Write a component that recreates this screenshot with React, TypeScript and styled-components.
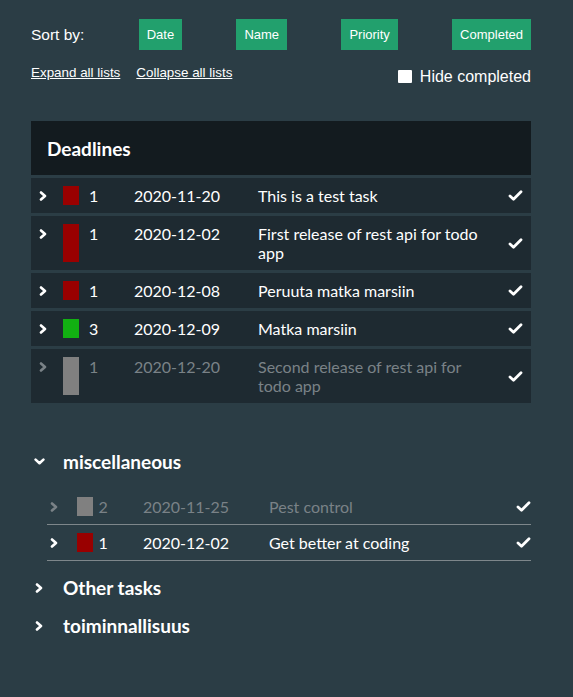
import React from "react";
import styled, { createGlobalStyle } from "styled-components";

const GlobalStyle = createGlobalStyle`
  html, body {
    margin: 0;
    padding: 0;
    background: #2b3d45;
    min-height: 100%;
  }
  body {
    font-family: "Liberation Sans", Arial, sans-serif;
    color: #ffffff;
  }
`;

const Page = styled.div`
  width: 500px;
  padding: 19px 42px 40px 31px;
`;

const SortRow = styled.div`
  display: flex;
  justify-content: space-between;
  align-items: center;
  height: 31px;
`;

const SortLabel = styled.span`
  font-size: 15.5px;
  line-height: 18px;
`;

const SortButton = styled.button`
  height: 31px;
  padding: 0 8px;
  border: none;
  background: #22a06d;
  color: #ffffff;
  font-family: "Liberation Sans", Arial, sans-serif;
  font-size: 13px;
  cursor: pointer;
`;

const LinksRow = styled.div`
  display: flex;
  justify-content: space-between;
  align-items: flex-start;
  margin-top: 15px;
`;

const Links = styled.div`
  display: flex;
  gap: 16px;
`;

const TextLink = styled.a`
  font-size: 13.4px;
  line-height: 15px;
  color: #ffffff;
  text-decoration: underline;
  cursor: pointer;
`;

const HideLabel = styled.label`
  display: flex;
  align-items: flex-end;
  gap: 8px;
  margin-top: 3px;
  font-size: 16px;
  line-height: 18px;
`;

const CheckBox = styled.span`
  width: 14px;
  height: 13px;
  background: #ffffff;
  border-radius: 1px;
  margin-bottom: 3px;
`;

const DeadlineBox = styled.section`
  margin-top: 35px;
  display: flex;
  flex-direction: column;
  gap: 3px;
`;

const DeadlineHeader = styled.div`
  height: 54px;
  display: flex;
  align-items: center;
  padding-left: 16px;
  background: #131b1f;
  font-family: Lato, "Noto Sans", sans-serif;
  font-weight: 700;
  font-size: 19px;
  line-height: 23px;
`;

const TaskRow = styled.div<{ $nested?: boolean; $done?: boolean }>`
  display: grid;
  grid-template-columns: ${(p) =>
    p.$nested
      ? "26.5px 22px 44.5px 126px 228px 1fr"
      : "24px 26px 45px 124px 227px 1fr"};
  padding: ${(p) => (p.$nested ? "8px 0 8px 3px" : "8px")};
  background: ${(p) => (p.$nested ? "transparent" : "#1e2a31")};
  border-bottom: ${(p) => (p.$nested ? "1px solid #7e878b" : "none")};
  font-family: Lato, "Noto Sans", sans-serif;
  font-size: 16px;
  line-height: 19px;
  color: ${(p) => (p.$done ? "#7a8287" : "#ffffff")};
`;

const Cell = styled.div`
  min-width: 0;
`;

const ChevronCell = styled.div`
  height: 19px;
  display: flex;
  align-items: center;
`;

const PriorityBox = styled.div<{ $color: string }>`
  width: 16px;
  height: 100%;
  min-height: 19px;
  background: ${(p) => p.$color};
`;

const CheckCell = styled.div`
  align-self: center;
  justify-self: end;
  display: flex;
`;

const Group = styled.section`
  margin-top: 47px;
  display: flex;
  flex-direction: column;
  gap: 15px;
`;

const GroupItem = styled.div`
  display: flex;
  flex-direction: column;
  gap: 16px;
`;

const GroupHeading = styled.div`
  display: flex;
  align-items: center;
  font-family: Lato, "Noto Sans", sans-serif;
  font-weight: 700;
  font-size: 19px;
  line-height: 23px;
`;

const HeadingIcon = styled.span`
  width: 16px;
  margin-right: 16px;
  display: flex;
  justify-content: center;
  align-items: center;
`;

const NestedList = styled.div`
  margin-left: 16px;
  display: flex;
  flex-direction: column;
`;

const ChevronRight = ({ color = "#fff" }: { color?: string }) => (
  <svg width="8" height="10" viewBox="0 0 8 10">
    <polyline points="2,1.5 6,5 2,8.5" fill="none" stroke={color} strokeWidth="2.6" strokeLinecap="round" strokeLinejoin="round" />
  </svg>
);

const ChevronDown = () => (
  <svg width="11" height="7" viewBox="0 0 11 7">
    <polyline points="1.6,1.6 5.5,5.2 9.4,1.6" fill="none" stroke="#fff" strokeWidth="2.6" strokeLinecap="round" strokeLinejoin="round" />
  </svg>
);

const CheckIcon = () => (
  <svg width="15" height="11" viewBox="0 0 15 11">
    <polyline points="2,6 5.5,9.2 13,1.8" fill="none" stroke="#fff" strokeWidth="2.8" strokeLinecap="round" strokeLinejoin="round" />
  </svg>
);

type Task = { prio: number; color: string; date: string; name: string; done?: boolean };

const deadlines: Task[] = [
  { prio: 1, color: "#990000", date: "2020-11-20", name: "This is a test task" },
  { prio: 1, color: "#990000", date: "2020-12-02", name: "First release of rest api for todo app" },
  { prio: 1, color: "#990000", date: "2020-12-08", name: "Peruuta matka marsiin" },
  { prio: 3, color: "#12b012", date: "2020-12-09", name: "Matka marsiin" },
  { prio: 1, color: "#808080", date: "2020-12-20", name: "Second release of rest api for todo app", done: true },
];

const misc: Task[] = [
  { prio: 2, color: "#808080", date: "2020-11-25", name: "Pest control", done: true },
  { prio: 1, color: "#990000", date: "2020-12-02", name: "Get better at coding" },
];

const Row = ({ t, nested }: { t: Task; nested?: boolean }) => (
  <TaskRow $nested={nested} $done={t.done}>
    <ChevronCell>
      <ChevronRight color={t.done ? "#7a8287" : "#fff"} />
    </ChevronCell>
    <Cell>
      <PriorityBox $color={t.color} />
    </Cell>
    <Cell>{t.prio}</Cell>
    <Cell>{t.date}</Cell>
    <Cell>{t.name}</Cell>
    <CheckCell>
      <CheckIcon />
    </CheckCell>
  </TaskRow>
);

export default function App() {
  return (
    <>
      <GlobalStyle />
      <Page>
        <SortRow>
          <SortLabel>Sort by:</SortLabel>
          <SortButton>Date</SortButton>
          <SortButton>Name</SortButton>
          <SortButton>Priority</SortButton>
          <SortButton>Completed</SortButton>
        </SortRow>
        <LinksRow>
          <Links>
            <TextLink>Expand all lists</TextLink>
            <TextLink>Collapse all lists</TextLink>
          </Links>
          <HideLabel>
            <CheckBox />
            Hide completed
          </HideLabel>
        </LinksRow>
        <DeadlineBox>
          <DeadlineHeader>Deadlines</DeadlineHeader>
          {deadlines.map((t, i) => (
            <Row key={i} t={t} />
          ))}
        </DeadlineBox>
        <Group>
          <GroupItem>
            <GroupHeading>
              <HeadingIcon>
                <ChevronDown />
              </HeadingIcon>
              miscellaneous
            </GroupHeading>
            <NestedList>
              {misc.map((t, i) => (
                <Row key={i} t={t} nested />
              ))}
            </NestedList>
          </GroupItem>
          <GroupItem>
            <GroupHeading>
              <HeadingIcon>
                <ChevronRight />
              </HeadingIcon>
              Other tasks
            </GroupHeading>
          </GroupItem>
          <GroupItem>
            <GroupHeading>
              <HeadingIcon>
                <ChevronRight />
              </HeadingIcon>
              toiminnallisuus
            </GroupHeading>
          </GroupItem>
        </Group>
      </Page>
    </>
  );
}
